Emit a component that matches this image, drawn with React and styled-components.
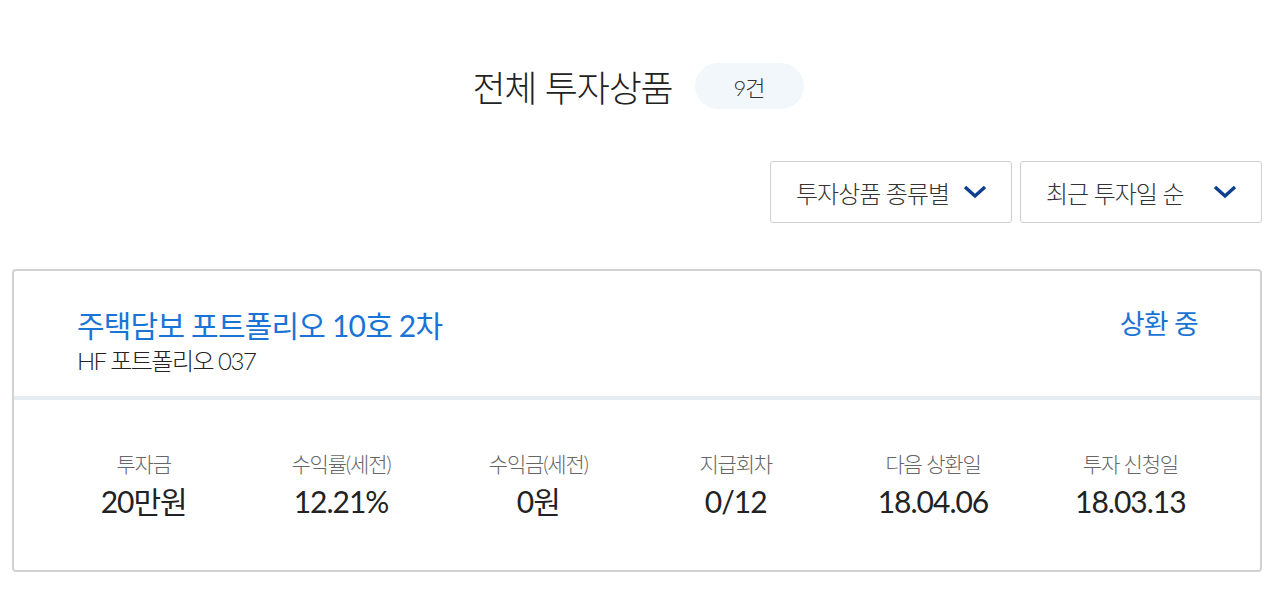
import styled, { createGlobalStyle } from "styled-components";

const Global = createGlobalStyle`
  body {
    margin: 0;
    background: #fff;
    font-family: Lato, "Noto Sans CJK KR", sans-serif;
    font-weight: 300;
    color: #222;
  }
`;

const Page = styled.div`
  padding: 60px 18px 0 12px;
`;

const Heading = styled.div`
  display: flex;
  justify-content: center;
  align-items: center;
  gap: 22px;
  padding-left: 2px;
`;

const Title = styled.h1`
  margin: 0;
  font-size: 36px;
  font-weight: 300;
  letter-spacing: -1.2px;
  color: #222;
`;

const Count = styled.span`
  display: flex;
  align-items: center;
  justify-content: center;
  width: 109px;
  height: 46px;
  border-radius: 23px;
  background: #f2f7fc;
  font-size: 22px;
  letter-spacing: -1px;
  color: #333;
`;

const Filters = styled.div`
  display: flex;
  justify-content: flex-end;
  gap: 8px;
  margin-top: 49px;
`;

const Select = styled.button`
  display: flex;
  align-items: center;
  justify-content: space-between;
  width: 242px;
  height: 62px;
  padding: 0 24px 0 25px;
  box-sizing: border-box;
  border: 1px solid #cfcfcf;
  border-radius: 3px;
  background: #fff;
  font-family: inherit;
  font-weight: 300;
  font-size: 24px;
  letter-spacing: -1px;
  color: #333;
`;

const Card = styled.section`
  margin-top: 46px;
  border: 2px solid #d2d2d2;
  border-radius: 4px;
  height: 303px;
  box-sizing: border-box;
`;

const CardHead = styled.div`
  display: flex;
  justify-content: space-between;
  align-items: flex-start;
  padding: 33px 62px 0 63px;
  height: 129px;
  box-sizing: border-box;
  border-bottom: 4px solid #e7ecf3;
`;

const Name = styled.div`
  font-size: 30px;
  font-weight: 400;
  color: #1a74d6;
  letter-spacing: -0.8px;
  line-height: 42px;
`;

const Sub = styled.div`
  font-size: 24px;
  color: #222;
  letter-spacing: -1.5px;
  line-height: 30px;
`;

const Status = styled.div`
  font-size: 27px;
  font-weight: 400;
  color: #1a74d6;
  letter-spacing: -0.8px;
  line-height: 40px;
`;

const Stats = styled.div`
  display: grid;
  grid-template-columns: repeat(6, 1fr);
  padding: 50px 31px 0 31px;
`;

const Stat = styled.div`
  display: flex;
  flex-direction: column;
  align-items: center;
`;

const Label = styled.div`
  font-size: 21px;
  color: #666;
  letter-spacing: -1.2px;
  line-height: 28px;
`;

const Value = styled.div`
  font-size: 30px;
  font-weight: 400;
  color: #222;
  letter-spacing: -1px;
  line-height: 40px;
  margin-top: 3px;
`;

const Chevron = () => (
  <svg width="24" height="14" viewBox="0 0 24 14">
    <path d="M2 2 L12 11 L22 2" fill="none" stroke="#0d3f8f" strokeWidth="3.4" />
  </svg>
);

const stats = [
  ["투자금", "20만원"],
  ["수익률(세전)", "12.21%"],
  ["수익금(세전)", "0원"],
  ["지급회차", "0/12"],
  ["다음 상환일", "18.04.06"],
  ["투자 신청일", "18.03.13"],
];

export default function App() {
  return (
    <Page>
      <Global />
      <Heading>
        <Title>전체 투자상품</Title>
        <Count>9건</Count>
      </Heading>
      <Filters>
        <Select>
          투자상품 종류별
          <Chevron />
        </Select>
        <Select>
          최근 투자일 순
          <Chevron />
        </Select>
      </Filters>
      <Card>
        <CardHead>
          <div>
            <Name>주택담보 포트폴리오 10호 2차</Name>
            <Sub>HF 포트폴리오 037</Sub>
          </div>
          <Status>상환 중</Status>
        </CardHead>
        <Stats>
          {stats.map(([l, v]) => (
            <Stat key={l}>
              <Label>{l}</Label>
              <Value>{v}</Value>
            </Stat>
          ))}
        </Stats>
      </Card>
    </Page>
  );
}
